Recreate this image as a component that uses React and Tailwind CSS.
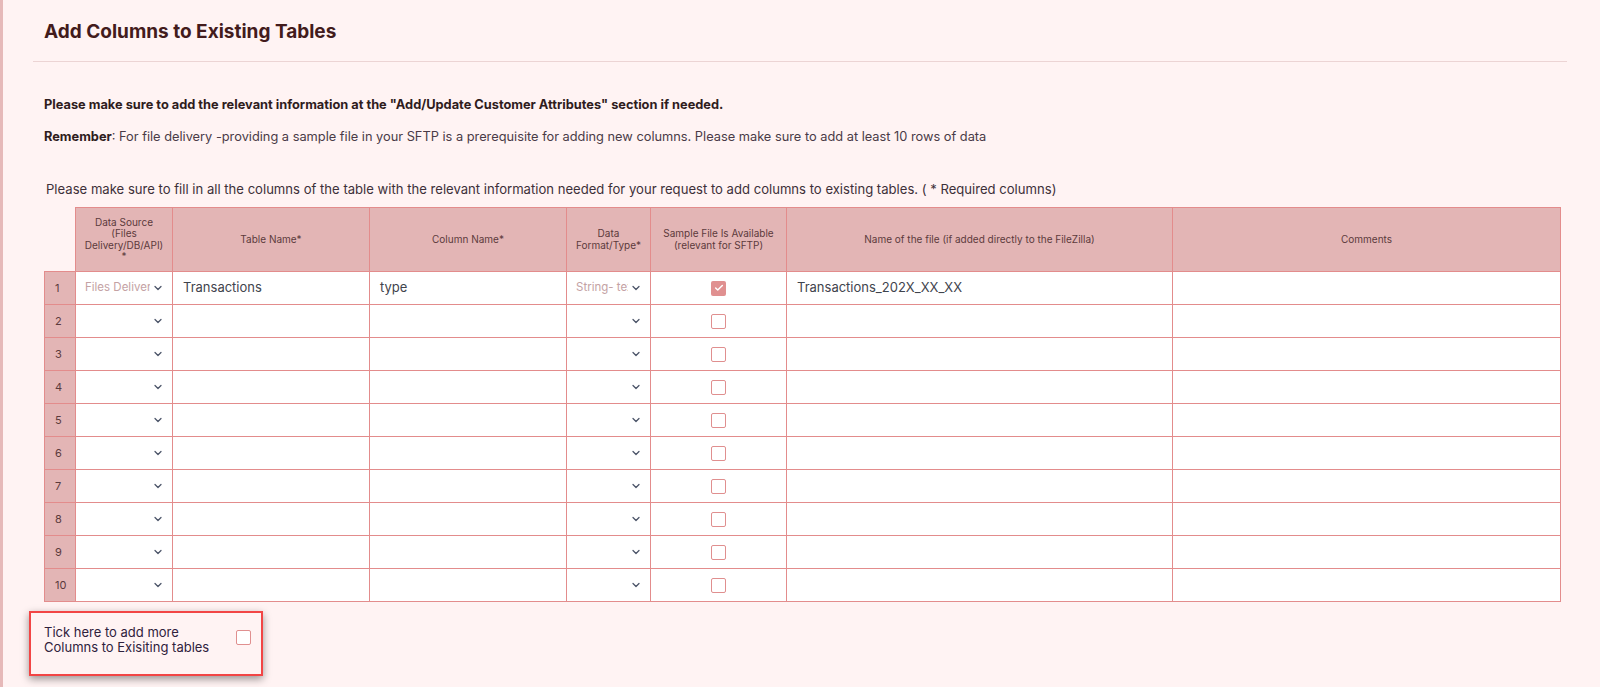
import { ChevronDown, Check } from 'lucide-react'

const rows = [1, 2, 3, 4, 5, 6, 7, 8, 9, 10]

function SelectCell({ value }) {
  return (
    <div className="flex items-center justify-between pl-[9px] pr-[8px] h-[32px]">
      <span className="text-[11.5px] text-[#c4a2a4] whitespace-nowrap overflow-hidden flex-1 min-w-0">{value}</span>
      <ChevronDown className="w-3 h-3 shrink-0 ml-[2px] text-[#4b5468]" strokeWidth={2.5} />
    </div>
  )
}

function Box({ checked }) {
  if (checked) {
    return (
      <span className="inline-flex w-[15px] h-[15px] rounded-[2px] bg-[#e09090] items-center justify-center">
        <Check className="w-[10px] h-[10px] text-white" strokeWidth={3.5} />
      </span>
    )
  }
  return <span className="inline-block w-[15px] h-[15px] rounded-[2px] bg-white border border-[#e08f8f]" />
}

export default function App() {
  return (
    <div className="flex min-h-[687px] bg-[#fff3f3] font-['Inter',sans-serif]">
      <div className="w-[3px] bg-[#e6b9b9] shrink-0" />
      <div className="flex-1 pl-[26px] pr-[33px]">
        <div className="ml-[4px] h-[62px] border-b border-[#ecd4d4] pl-[11px] pt-[21px]">
          <h1 className="text-[19px] leading-[22px] font-bold text-[#431b1c]">Add Columns to Existing Tables</h1>
        </div>

        <div className="pl-[15px]">
          <p className="mt-[34px] text-[12.8px] leading-[18px] font-bold text-[#2f1c1d]">
            Please make sure to add the relevant information at the "Add/Update Customer Attributes" section if needed.
          </p>
          <p className="mt-[14px] text-[12.8px] leading-[18px] text-[#4a3b47]">
            <span className="font-bold text-[#2f1c1d]">Remember</span>: For file delivery -providing a sample file in your SFTP is a prerequisite for adding new columns. Please make sure to add at least 10 rows of data
          </p>
          <p className="mt-[34px] pl-[2px] text-[13.1px] leading-[18px] text-[#3d3039]">
            Please make sure to fill in all the columns of the table with the relevant information needed for your request to add columns to existing tables. ( * Required columns)
          </p>

          <table className="mt-[9px] table-fixed border-collapse w-[1516px]">
            <colgroup>
              <col className="w-[31px]" />
              <col className="w-[97px]" />
              <col className="w-[197px]" />
              <col className="w-[197px]" />
              <col className="w-[84px]" />
              <col className="w-[136px]" />
              <col className="w-[386px]" />
              <col className="w-[388px]" />
            </colgroup>
            <thead>
              <tr className="h-[64px] text-[10px] leading-[11.5px] font-normal text-[#5c3a3c]">
                <th className="p-0" />
                <th className="bg-[#e3b5b5] border border-[#e38c8c] px-2 font-normal">Data Source (Files Delivery/DB/API) *</th>
                <th className="bg-[#e3b5b5] border border-[#e38c8c] px-2 font-normal">Table Name*</th>
                <th className="bg-[#e3b5b5] border border-[#e38c8c] px-2 font-normal">Column Name*</th>
                <th className="bg-[#e3b5b5] border border-[#e38c8c] px-2 font-normal">Data Format/Type*</th>
                <th className="bg-[#e3b5b5] border border-[#e38c8c] px-2 font-normal">Sample File Is Available (relevant for SFTP)</th>
                <th className="bg-[#e3b5b5] border border-[#e38c8c] px-2 font-normal">Name of the file (if added directly to the FileZilla)</th>
                <th className="bg-[#e3b5b5] border border-[#e38c8c] px-2 font-normal">Comments</th>
              </tr>
            </thead>
            <tbody>
              {rows.map((n) => (
                <tr key={n} className="h-[33px]">
                  <td className="bg-[#e3b5b5] border border-[#e38c8c] pl-[10px] text-[11px] text-[#5c3a3c]">{n}</td>
                  <td className="bg-white border border-[#e38c8c] p-0">
                    <SelectCell value={n === 1 ? 'Files Delivery' : ''} />
                  </td>
                  <td className="bg-white border border-[#e38c8c] px-[10px] text-[13px] text-[#3f444d]">{n === 1 ? 'Transactions' : ''}</td>
                  <td className="bg-white border border-[#e38c8c] px-[10px] text-[13px] text-[#3f444d]">{n === 1 ? 'type' : ''}</td>
                  <td className="bg-white border border-[#e38c8c] p-0">
                    <SelectCell value={n === 1 ? 'String- text' : ''} />
                  </td>
                  <td className="bg-white border border-[#e38c8c] text-center align-middle">
                    <div className="flex justify-center">
                      <Box checked={n === 1} />
                    </div>
                  </td>
                  <td className="bg-white border border-[#e38c8c] px-[10px] text-[13px] text-[#3f444d]">{n === 1 ? 'Transactions_202X_XX_XX' : ''}</td>
                  <td className="bg-white border border-[#e38c8c]" />
                </tr>
              ))}
            </tbody>
          </table>
        </div>

        <div className="mt-[9px] w-[234px] h-[65px] border-2 border-[#f24545] shadow-[0_3px_8px_rgba(0,0,0,0.4)] flex justify-between pl-[13px] pr-[10px] pt-3">
          <p className="text-[13px] leading-[15px] text-[#2f213c]">
            Tick here to add more<br />Columns to Exisiting tables
          </p>
          <div className="pt-[2px]">
            <Box checked={false} />
          </div>
        </div>
      </div>
    </div>
  )
}
